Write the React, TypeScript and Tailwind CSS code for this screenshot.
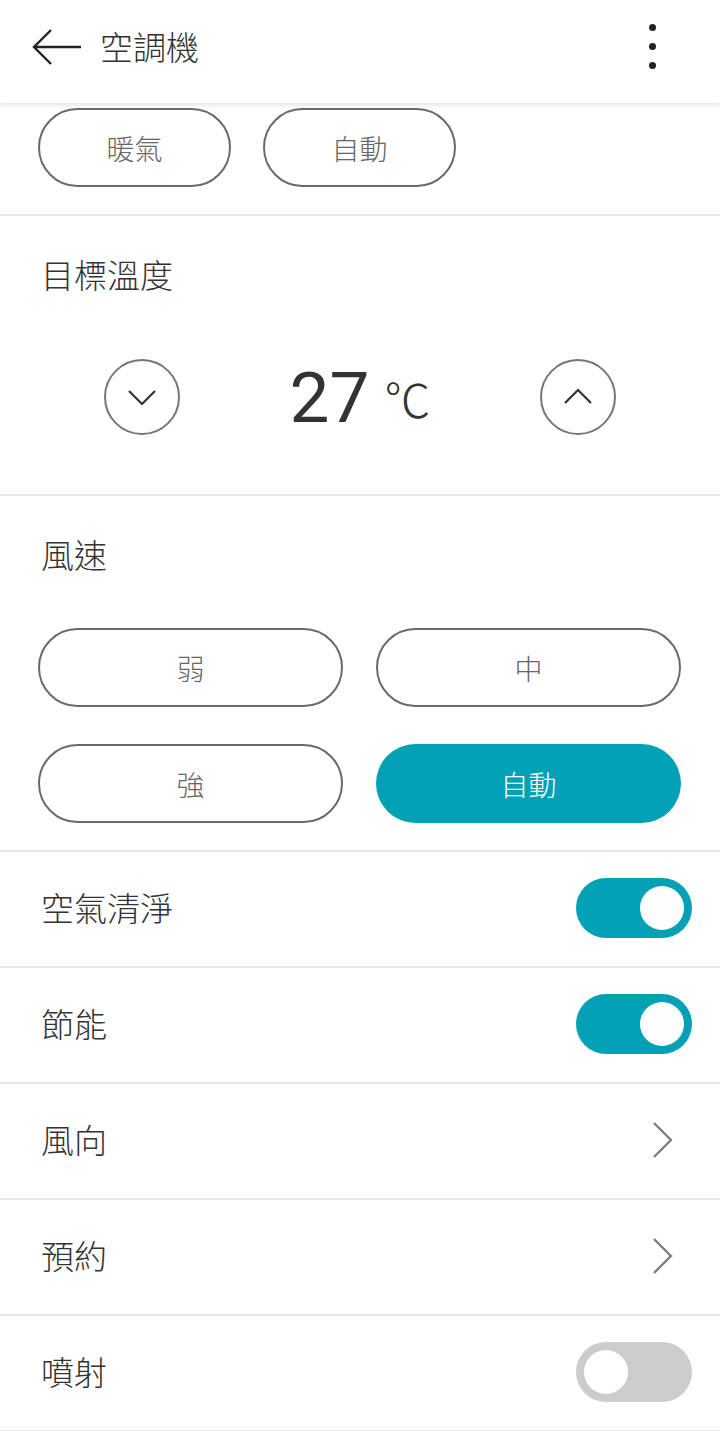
import { useState } from "react";

const TEAL = "bg-[#03a1b6]";

function Toggle({ on }: { on: boolean }) {
  return (
    <div
      className={`w-[116px] h-[60px] rounded-full flex items-center px-[8px] ${
        on ? `${TEAL} justify-end` : "bg-[#cccccc] justify-start"
      }`}
    >
      <span className="w-[44px] h-[44px] rounded-full bg-white block" />
    </div>
  );
}

function ChevronRight() {
  return (
    <svg width="24" height="38" viewBox="0 0 24 38" fill="none">
      <path d="M3 2 L20 19 L3 36" stroke="#7a7a7a" strokeWidth="2.2" />
    </svg>
  );
}

function Pill({ label, active = false }: { label: string; active?: boolean }) {
  return (
    <button
      className={`w-full h-[79px] rounded-full flex items-center justify-center text-[28px] font-light ${
        active
          ? `${TEAL} text-white`
          : "border-2 border-[#6a6a6a] text-[#666666] bg-white"
      }`}
    >
      {label}
    </button>
  );
}

const rows = [
  { label: "空氣清淨", kind: "toggle", on: true },
  { label: "節能", kind: "toggle", on: true },
  { label: "風向", kind: "link" },
  { label: "預約", kind: "link" },
  { label: "噴射", kind: "toggle", on: false },
];

export default function App() {
  const [temp] = useState(27);

  return (
    <div className="w-[720px] min-h-[1431px] bg-white font-['Noto_Sans_CJK_TC','Noto_Sans',sans-serif] font-light text-[#333333]">
      {/* Header */}
      <header className="relative z-10 h-[103px] flex items-center pl-[31px] pr-[64px] pb-[10px] bg-white shadow-[0_2px_5px_rgba(0,0,0,0.12)]">
        <svg width="52" height="40" viewBox="0 0 52 40" fill="none">
          <path d="M50 20 H4 M20 3 L3 20 L20 37" stroke="#222222" strokeWidth="2.4" />
        </svg>
        <h1 className="ml-[17px] text-[33px] leading-none text-[#333333]">空調機</h1>
        <div className="ml-auto flex flex-col items-center gap-[12px]">
          <span className="w-[7px] h-[7px] rounded-full bg-[#222222]" />
          <span className="w-[7px] h-[7px] rounded-full bg-[#222222]" />
          <span className="w-[7px] h-[7px] rounded-full bg-[#222222]" />
        </div>
      </header>

      {/* Mode */}
      <section className="pt-[5px] pb-[27px] px-[38px] flex gap-[32px] border-b-2 border-[#e8e8e8]">
        <div className="w-[193px]">
          <Pill label="暖氣" />
        </div>
        <div className="w-[193px]">
          <Pill label="自動" />
        </div>
      </section>

      {/* Target temperature */}
      <section className="pt-[38px] pb-[59px] border-b-2 border-[#e8e8e8]">
        <h2 className="px-[41px] text-[33px] leading-[40px]">目標溫度</h2>
        <div className="mt-[65px] w-[512px] mx-auto flex items-center justify-between">
          <button className="w-[76px] h-[76px] rounded-full border-2 border-[#777777] flex items-center justify-center">
            <svg width="30" height="18" viewBox="0 0 30 18" fill="none">
              <path d="M2 3 L15 16 L28 3" stroke="#333333" strokeWidth="2.2" />
            </svg>
          </button>
          <div className="flex items-center">
            <span className="font-['Roboto',sans-serif] font-normal text-[71px] leading-none text-[#333333]">{temp}</span>
            <span className="ml-[15px] text-[46px] leading-none text-[#333333]">℃</span>
          </div>
          <button className="w-[76px] h-[76px] rounded-full border-2 border-[#777777] flex items-center justify-center">
            <svg width="30" height="18" viewBox="0 0 30 18" fill="none">
              <path d="M2 15 L15 2 L28 15" stroke="#333333" strokeWidth="2.2" />
            </svg>
          </button>
        </div>
      </section>

      {/* Fan speed */}
      <section className="pt-[38px] pb-[27px] border-b-2 border-[#e8e8e8]">
        <h2 className="px-[41px] text-[33px] leading-[40px]">風速</h2>
        <div className="mt-[54px] pl-[38px] pr-[39px] grid grid-cols-2 gap-x-[33px] gap-y-[37px]">
          <Pill label="弱" />
          <Pill label="中" />
          <Pill label="強" />
          <Pill label="自動" active />
        </div>
      </section>

      {/* Settings rows */}
      {rows.map((r) => (
        <div
          key={r.label}
          className="h-[116px] flex items-center pl-[41px] pb-[3px] border-b-2 border-[#e8e8e8]"
        >
          <span className="text-[33px] leading-none">{r.label}</span>
          <div className={`ml-auto ${r.kind === "toggle" ? "pr-[28px]" : "pr-[45px]"}`}>
            {r.kind === "toggle" ? <Toggle on={!!r.on} /> : <ChevronRight />}
          </div>
        </div>
      ))}
    </div>
  );
}
